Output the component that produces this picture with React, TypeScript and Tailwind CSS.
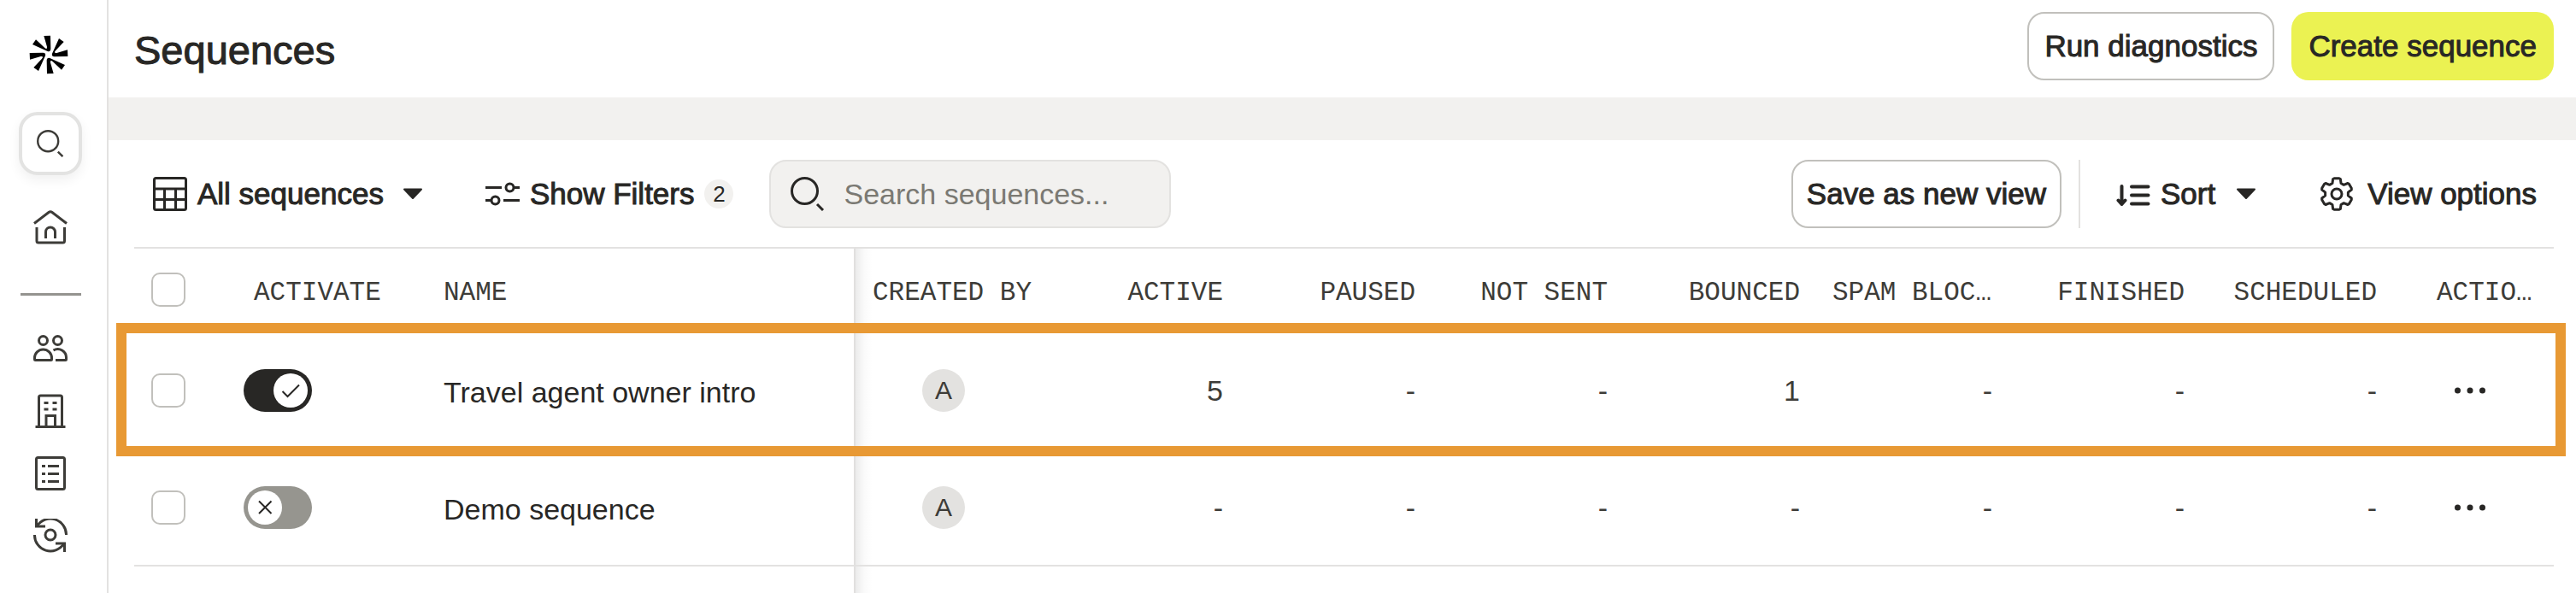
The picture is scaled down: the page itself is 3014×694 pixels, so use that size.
import { useState } from "react";
import type { ReactNode } from "react";

interface Sequence {
  id: number;
  name: string;
  enabled: boolean;
  owner: string;
  stats: (number | null)[];
}

const STAT_COLUMNS = [
  "Active",
  "Paused",
  "Not sent",
  "Bounced",
  "Spam blocked",
  "Finished",
  "Scheduled",
];

const SEQUENCES: Sequence[] = [
  {
    id: 1,
    name: "Travel agent owner intro",
    enabled: true,
    owner: "A",
    stats: [5, null, null, 1, null, null, null],
  },
  {
    id: 2,
    name: "Demo sequence",
    enabled: false,
    owner: "A",
    stats: [null, null, null, null, null, null, null],
  },
];

// Weight between regular and bold, which the interface font does not have.
const MEDIUM = "text-[35px] [-webkit-text-stroke:1px_currentColor]";

const Icon = ({
  children,
  className = "size-10",
  strokeWidth = 3,
}: {
  children: ReactNode;
  className?: string;
  strokeWidth?: number;
}) => (
  <svg
    viewBox="0 0 40 40"
    fill="none"
    stroke="currentColor"
    strokeWidth={strokeWidth}
    aria-hidden="true"
    className={`shrink-0 ${className}`}
  >
    {children}
  </svg>
);

const LOGO_ARMS = "M-17-66 6-67 7-20Q6-9-4-12L-57-36-45-53-14-24Q-5-16-6-28Z";

const Logo = () => (
  <svg viewBox="-69 -69 138 138" className="size-[46px]" aria-hidden="true">
    {[0, 90, 180, 270].map((angle) => (
      <path key={angle} d={LOGO_ARMS} transform={`rotate(${angle})`} />
    ))}
  </svg>
);

const SearchIcon = ({
  className,
  strokeWidth,
}: {
  className?: string;
  strokeWidth?: number;
}) => (
  <Icon className={className} strokeWidth={strokeWidth}>
    <circle cx="16.5" cy="16.5" r="15" />
    <path d="M31 32l7 7" />
  </Icon>
);

const HomeIcon = () => (
  <Icon>
    <path d="M1 15.5 18 2.5q2-1.5 4 0L39 15.5" />
    <path d="M4 20v16q0 2 2 2h28.5q2 0 2-2V20" />
    <path d="M14.5 33v-7.500a5.500 5.500 0 0 1 11 0V33" />
  </Icon>
);

const PeopleIcon = () => (
  <Icon>
    <circle cx="11.500" cy="10.500" r="5" />
    <circle cx="28.500" cy="10.500" r="5" />
    <path d="M1.500 31a10 10 0 0 1 20 0v1.500q0 1-1 1h-18q-1 0-1-1z" />
    <path d="M23.500 22a10 10 0 0 1 15 9v1.500q0 1-1 1H26" />
  </Icon>
);

const CompanyIcon = () => (
  <Icon>
    <path d="M6.500 38V4q0-2 2-2h23q2 0 2 2v34M2.500 38.500h35" />
    <path d="M12.500 10.500h5M22.500 10.500h5M12.500 18h5M22.500 18h5" />
    <path d="M15 38V25.500h10.500V38" />
  </Icon>
);

const ListIcon = () => (
  <Icon>
    <rect x="3.500" y="1.500" width="33" height="37" rx="2" />
    <path d="M10 11.500h4M10 20.500h4M10 29.500h4" />
    <path d="M17 11.500h13M17 20.500h13M17 29.500h13" />
  </Icon>
);

const SyncIcon = () => (
  <Icon>
    <circle cx="20" cy="19" r="6" />
    <path d="M4.500 8.500A18.500 18.500 0 0 1 38.500 19M1.500 19A18.500 18.500 0 0 0 35.500 29.500" />
    <path d="M3.500 0v9H14M36.500 39V29H26" />
  </Icon>
);

const TableIcon = () => (
  <Icon>
    <rect x="1.500" y="1.500" width="37" height="37" rx="2" />
    <path d="M1.500 14h37M1.500 26.500h37M13.500 14v24M26.500 14v24" />
  </Icon>
);

const SlidersIcon = () => (
  <Icon>
    <path d="M0 12.500h19M34 12.500h6M0 27.500h6M21 27.500h19" />
    <circle cx="28.500" cy="12.500" r="4.500" />
    <circle cx="11.500" cy="27.500" r="4.500" />
  </Icon>
);

const SortIcon = () => (
  <Icon strokeWidth={4}>
    <path
      d="M6.500 11v21M2.500 27.500l4 4.500 4-4.500M18 11.500h19.500M18 21.500h19.500M18 31.500h19.500"
      strokeLinecap="round"
      strokeLinejoin="round"
    />
  </Icon>
);

// Six teeth, each given as [degrees from its axis, radius].
const gearPath = () => {
  const tooth = [
    [-22, 13.5],
    [-14, 18],
    [-9, 18.5],
    [9, 18.5],
    [14, 18],
    [22, 13.5],
  ];
  const points = [0, 60, 120, 180, 240, 300].flatMap((axis) =>
    tooth.map(([offset, radius]) => {
      const angle = ((axis + offset - 90) * Math.PI) / 180;
      const x = 20 + radius * Math.cos(angle);
      const y = 20 + radius * Math.sin(angle);
      return `${x.toFixed(2)} ${y.toFixed(2)}`;
    }),
  );
  return `M${points.join("L")}Z`;
};

const GearIcon = () => (
  <Icon>
    <path d={gearPath()} strokeLinejoin="round" />
    <circle cx="20" cy="20" r="6" />
  </Icon>
);

const Caret = () => (
  <svg viewBox="0 0 24 14" className="h-3.5 w-6 shrink-0" aria-hidden="true">
    <path
      d="M2 1.500h20L12 12z"
      fill="currentColor"
      stroke="currentColor"
      strokeWidth="2"
      strokeLinejoin="round"
    />
  </svg>
);

const NAV_ITEMS = [
  { label: "People", icon: <PeopleIcon /> },
  { label: "Companies", icon: <CompanyIcon /> },
  { label: "Lists", icon: <ListIcon /> },
  { label: "Enrichment", icon: <SyncIcon /> },
];

const Sidebar = () => (
  <nav className="flex w-[127px] shrink-0 flex-col items-center border-r-2 border-[#e3e2e1] pr-[7px] text-[#3d3c38]">
    <a href="#home" aria-label="Apollo" className="mt-[41px] mr-1 text-black">
      <Logo />
    </a>
    <button
      type="button"
      aria-label="Search"
      className="mt-11 flex size-[74px] items-center justify-center rounded-[22px] border-4 border-[#e3e3e2] bg-white shadow-[0_6px_14px_rgba(0,0,0,0.06)]"
    >
      <SearchIcon className="size-8" />
    </button>
    <a href="#home" aria-label="Home" className="mt-[41px]">
      <HomeIcon />
    </a>
    <hr className="mt-[57px] w-[71px] border-t-3 border-[#94938f]" />
    <div className="mt-[42px] flex flex-col gap-[33px]">
      {NAV_ITEMS.map(({ label, icon }) => (
        <a key={label} href="#" aria-label={label}>
          {icon}
        </a>
      ))}
    </div>
  </nav>
);

const Header = () => (
  <header className="flex items-center justify-between pt-3.5 pr-[26px] pb-5 pl-[30px]">
    <h1 className="pt-2.5 text-[47px] leading-[60px] [-webkit-text-stroke:1px_currentColor]">
      Sequences
    </h1>
    <div className={`flex gap-5 ${MEDIUM}`}>
      <button
        type="button"
        className="h-20 rounded-[20px] border-2 border-[#c1c0bc] px-[18px]"
      >
        Run diagnostics
      </button>
      <button type="button" className="h-20 rounded-[20px] bg-[#ebf252] px-5">
        Create sequence
      </button>
    </div>
  </header>
);

const Toolbar = () => (
  <div className="flex items-center justify-between pt-[23px] pb-[22px]">
    <div className="flex items-center">
      <button type="button" className={`flex items-center pl-[22px] ${MEDIUM}`}>
        <TableIcon />
        <span className="mr-[22px] ml-3">All sequences</span>
        <Caret />
      </button>
      <button type="button" className="ml-[73px] flex items-center gap-3">
        <SlidersIcon />
        <span className={MEDIUM}>Show Filters</span>
        <span className="flex size-[34px] items-center justify-center rounded-full bg-[#f2f1ef] text-[26px]">
          2
        </span>
      </button>
      <label className="ml-[42px] flex h-20 w-[470px] items-center gap-[22px] rounded-[20px] border-2 border-[#e3e2e0] bg-[#f2f1ef] px-[23px]">
        <SearchIcon />
        <input
          type="text"
          aria-label="Search sequences"
          placeholder="Search sequences..."
          className="w-full min-w-0 bg-transparent outline-none placeholder:text-[#7a7973]"
        />
      </label>
    </div>
    <div className={`flex items-center ${MEDIUM}`}>
      <button
        type="button"
        className="h-20 rounded-[20px] border-2 border-[#c1c0bc] px-4"
      >
        Save as new view
      </button>
      <span className="mx-5 h-20 w-0.5 bg-[#e3e2e0]" />
      <button type="button" className="flex items-center px-[22px]">
        <SortIcon />
        <span className="mr-6 ml-3">Sort</span>
        <Caret />
      </button>
      <button type="button" className="ml-[52px] flex items-center gap-4 pr-5">
        <GearIcon />
        View options
      </button>
    </div>
  </div>
);

const Checkbox = ({ label }: { label: string }) => (
  <input
    type="checkbox"
    aria-label={label}
    className="block size-10 appearance-none rounded-[10px] border-2 border-[#c1c0bc] bg-white checked:bg-[#282725]"
  />
);

const Toggle = ({
  checked,
  label,
  onChange,
}: {
  checked: boolean;
  label: string;
  onChange: () => void;
}) => (
  <button
    type="button"
    role="switch"
    aria-checked={checked}
    aria-label={label}
    onClick={onChange}
    className={`flex h-[50px] w-20 items-center rounded-full px-[5px] ${
      checked ? "justify-end bg-[#282725]" : "justify-start bg-[#96958f]"
    }`}
  >
    <span className="size-10 rounded-full bg-white">
      <Icon strokeWidth={2}>
        {checked ? (
          <path d="M10.500 21l6 6L30 13.500" />
        ) : (
          <path d="M13 12.500l14.500 14.500M27.500 12.500L13 27" />
        )}
      </Icon>
    </span>
  </button>
);

const PINNED_EDGE =
  "relative border-r-2 border-r-[#e1e0df] after:absolute after:inset-y-0 after:left-full after:ml-0.5 after:w-5 after:bg-linear-to-r after:from-black/8 after:via-black/2 after:to-transparent";

const SequenceTable = () => {
  const [sequences, setSequences] = useState(SEQUENCES);

  const toggleSequence = (id: number) =>
    setSequences((current) =>
      current.map((item) =>
        item.id === id ? { ...item, enabled: !item.enabled } : item,
      ),
    );

  return (
    <table className="w-full table-fixed border-separate border-spacing-0 text-left">
      <colgroup>
        <col className="w-[120px]" />
        <col className="w-[222px]" />
        <col className="w-[502px]" />
        <col className="w-[224px]" />
        {STAT_COLUMNS.map((column) => (
          <col key={column} />
        ))}
        <col className="w-[188px]" />
      </colgroup>
      <thead>
        <tr className="h-[100px] font-['Liberation_Mono',monospace] text-[31px] text-[#3d3c38] uppercase *:border-y-2 *:border-y-[#e3e2e1] *:font-normal">
          <th className="pl-5">
            <Checkbox label="Select all sequences" />
          </th>
          <th className="pt-2 pl-5">Activate</th>
          <th className={`pt-2 pl-5 ${PINNED_EDGE}`}>Name</th>
          <th className="pt-2 pl-5">Created by</th>
          {STAT_COLUMNS.map((column) => (
            <th
              key={column}
              className="truncate px-[19px] pt-2 text-right"
              title={column}
            >
              {column}
            </th>
          ))}
          <th className="truncate pt-2 pr-[19px] pl-[51px]">Actions</th>
        </tr>
      </thead>
      <tbody>
        {sequences.map((sequence) => (
          <tr
            key={sequence.id}
            className="h-[137px] *:border-b-2 *:border-b-[#e3e2e1]"
          >
            <td className="pl-5">
              <Checkbox label={`Select ${sequence.name}`} />
            </td>
            <td className="pl-2">
              <Toggle
                checked={sequence.enabled}
                label={`Activate ${sequence.name}`}
                onChange={() => toggleSequence(sequence.id)}
              />
            </td>
            <td className={`pt-1 pl-5 ${PINNED_EDGE}`}>{sequence.name}</td>
            <td>
              <span className="ml-[78px] flex size-[50px] items-center justify-center rounded-full bg-[#e3e2e0] text-[30px] text-[#3d3c38]">
                {sequence.owner}
              </span>
            </td>
            {sequence.stats.map((value, index) => (
              <td key={index} className="px-[19px] text-right text-[#3d3c38]">
                {value ?? "-"}
              </td>
            ))}
            <td className="pl-[70px]">
              <button
                type="button"
                aria-label={`Actions for ${sequence.name}`}
                className="block"
              >
                <Icon>
                  <g fill="currentColor" stroke="none">
                    <circle cx="5.500" cy="20" r="3.500" />
                    <circle cx="20" cy="20" r="3.500" />
                    <circle cx="34.500" cy="20" r="3.500" />
                  </g>
                </Icon>
              </button>
            </td>
          </tr>
        ))}
        <tr className="h-[137px]">
          <td />
          <td />
          <td className={PINNED_EDGE} />
        </tr>
      </tbody>
    </table>
  );
};

const App = () => (
  <div className="flex h-screen overflow-hidden bg-white font-['Liberation_Sans',sans-serif] text-[34px] leading-[44px] whitespace-nowrap text-[#282725]">
    <Sidebar />
    <main className="min-w-0 flex-1">
      <Header />
      <div className="h-[50px] bg-[#f2f1ef]" />
      <section className="pr-[26px] pl-[30px]">
        <Toolbar />
        <div className="relative">
          <SequenceTable />
          {/* Highlight frame over the first sequence */}
          <div className="pointer-events-none absolute top-[89px] -right-3.5 -left-[21px] h-[156px] border-12 border-[#e89934]" />
        </div>
      </section>
    </main>
  </div>
);

export default App;
